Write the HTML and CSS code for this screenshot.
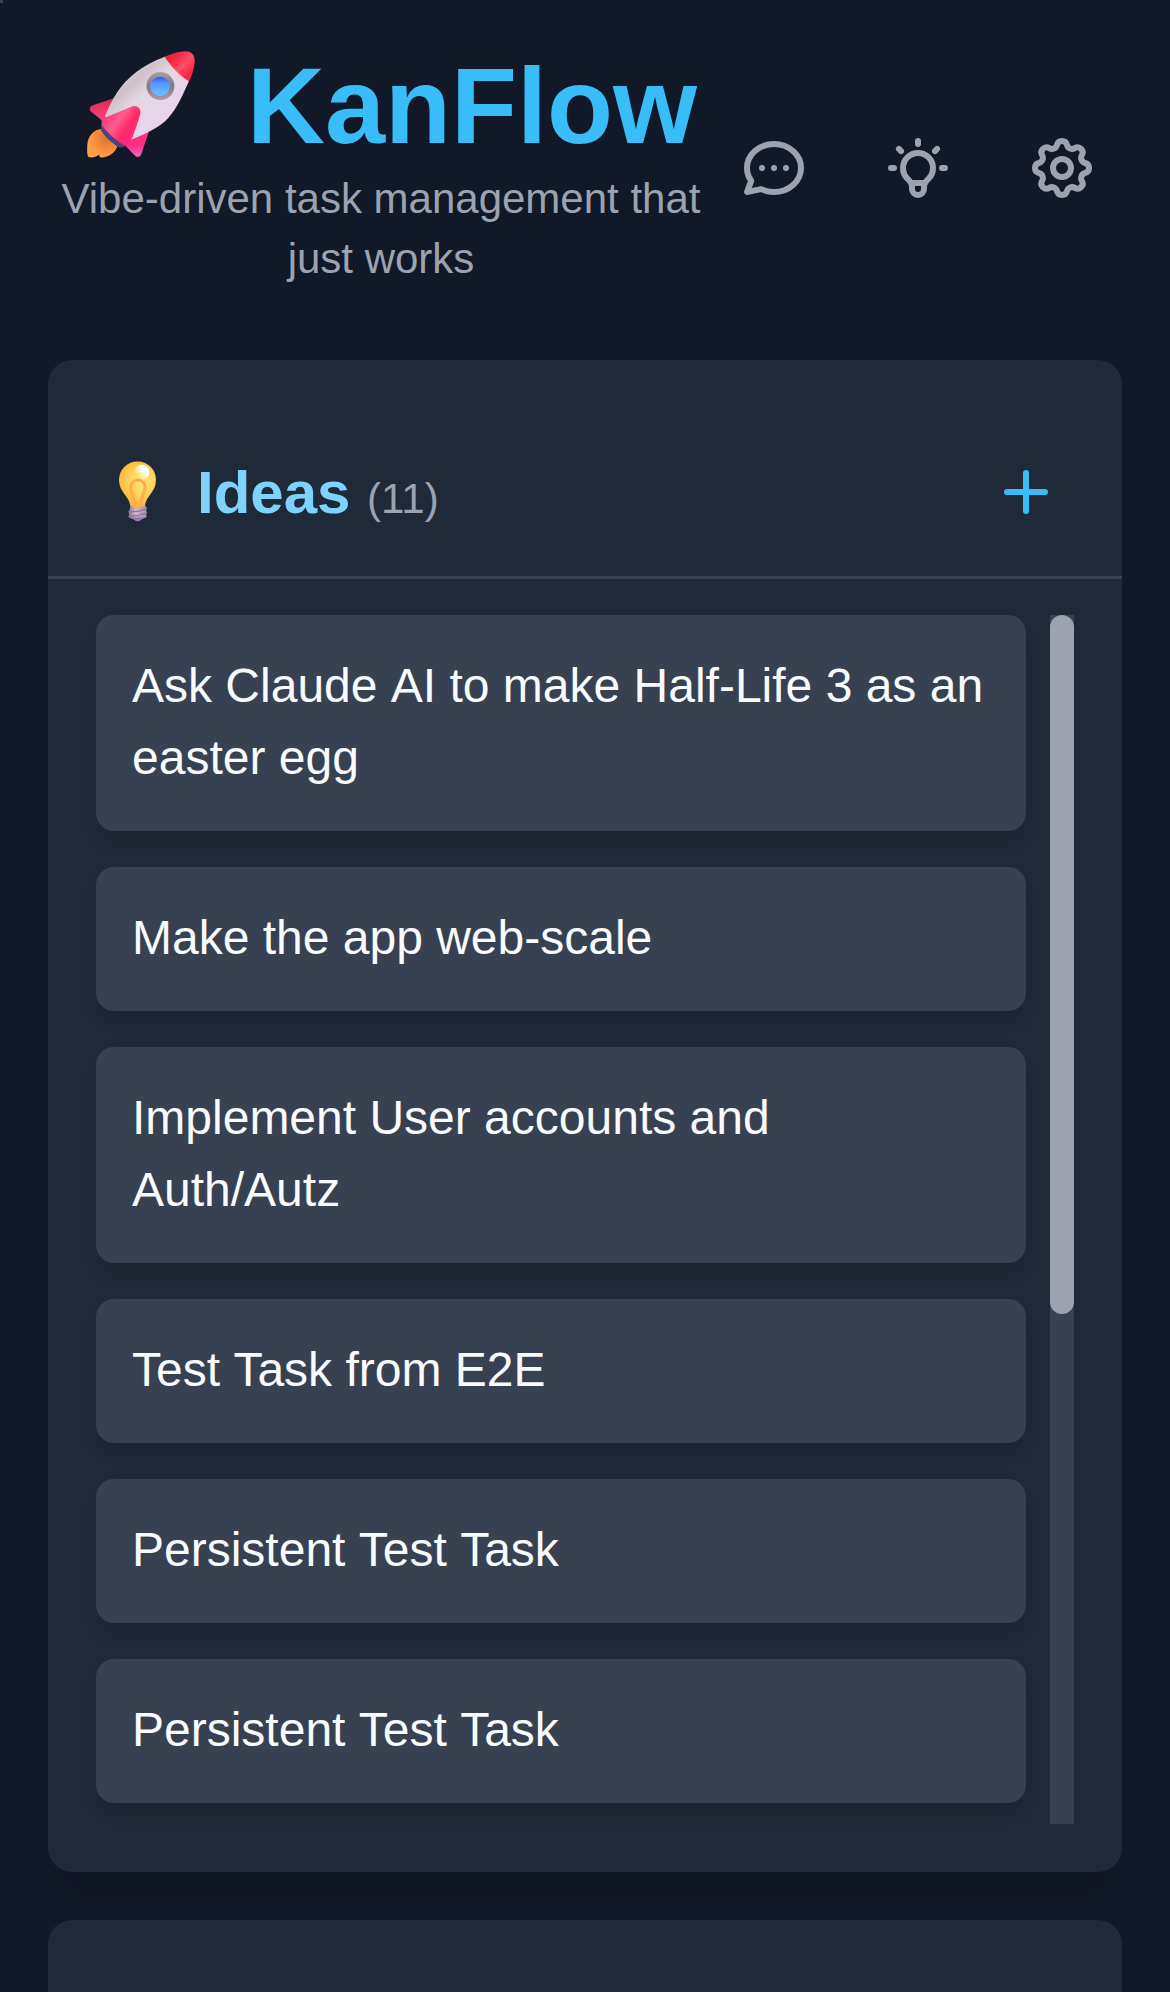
FILE: index.html
```html
<!DOCTYPE html>
<html lang="en">
<head>
<meta charset="utf-8">
<title>KanFlow</title>
<link rel="stylesheet" href="styles.css">
</head>
<body>
<span class="corner-mark"></span>
<header class="app-header">
  <div class="brand">
    <h1 class="brand-title">
      <svg class="rocket" viewBox="141 63 325 321" aria-hidden="true">
        <defs>
          <linearGradient id="hull" x1="240" y1="130" x2="370" y2="270" gradientUnits="userSpaceOnUse">
            <stop offset="0" stop-color="#dcd8dc"/><stop offset=".25" stop-color="#cfc0c9"/><stop offset=".5" stop-color="#e3d8e2"/><stop offset="1" stop-color="#ead2ee"/>
          </linearGradient>
          <linearGradient id="nose" x1="395" y1="75" x2="450" y2="130" gradientUnits="userSpaceOnUse">
            <stop offset="0" stop-color="#e52640"/><stop offset=".25" stop-color="#fb2b48"/><stop offset=".6" stop-color="#ff4f68"/><stop offset="1" stop-color="#f72645"/>
          </linearGradient>
          <linearGradient id="fin" x1="200" y1="255" x2="290" y2="320" gradientUnits="userSpaceOnUse">
            <stop offset="0" stop-color="#f3407c"/><stop offset=".35" stop-color="#ff5c90"/><stop offset=".65" stop-color="#ff2a66"/><stop offset="1" stop-color="#ff2a80"/>
          </linearGradient>
          <linearGradient id="rearFin" x1="0" y1="205" x2="0" y2="380" gradientUnits="userSpaceOnUse">
            <stop offset="0" stop-color="#d62a50"/><stop offset=".3" stop-color="#f63d75"/><stop offset=".8" stop-color="#ff2c82"/><stop offset="1" stop-color="#e76bbd"/>
          </linearGradient>
          <radialGradient id="flame" cx="200" cy="325" r="58" gradientUnits="userSpaceOnUse">
            <stop offset="0" stop-color="#d9742b"/><stop offset=".6" stop-color="#fa8b38"/><stop offset="1" stop-color="#ffa04c"/>
          </radialGradient>
          <linearGradient id="glass" x1="0" y1="140" x2="0" y2="198" gradientUnits="userSpaceOnUse">
            <stop offset="0" stop-color="#3656ee"/><stop offset=".35" stop-color="#559bff"/><stop offset="1" stop-color="#6cc0ff"/>
          </linearGradient>
          <linearGradient id="rim" x1="0" y1="126" x2="0" y2="210" gradientUnits="userSpaceOnUse">
            <stop offset="0" stop-color="#aaa0a6"/><stop offset=".5" stop-color="#82788a"/><stop offset="1" stop-color="#a89bac"/>
          </linearGradient>
        </defs>
        <path fill="url(#flame)" d="M184 297C163 298 144 317 142 343C141 358 141 371 144 380C151 386 165 383 177 375C179 378 178 381 182 383C203 385 227 368 232 350Z"/>
        <path fill="url(#rearFin)" d="M222 205L158 226C150 229 147 237 151 243L190 275L200 255Z"/>
        <path fill="url(#rearFin)" d="M328 303L304 374C301 381 293 383 287 379L255 346L274 325Z"/>
        <path fill="#4a4284" d="M184 282L182 299C192 318 218 343 240 354L257 350Z"/>
        <path fill="url(#hull)" d="M375 80C307 105 262 142 232 187C216 211 204 236 195 260L272 330C310 316 359 293 385 265C414 233 431 190 448 153C440 124 410 88 375 80Z"/>
        <path fill="url(#nose)" d="M375 80C401 68 425 61 446 64C459 68 466 79 465 96C463 119 456 138 448 154C420 137 391 107 375 80Z"/>
        <circle cx="362" cy="168" r="42" fill="url(#rim)"/>
        <circle cx="361" cy="169" r="29" fill="url(#glass)"/>
        <path fill="url(#fin)" d="M185 267L278 229C292 225 303 236 302 249C294 280 283 308 270 342C265 347 255 349 247 343C222 327 198 305 185 284Z"/>
      </svg>
      <span class="brand-name">KanFlow</span>
    </h1>
    <p class="tagline">Vibe-driven task management that just works</p>
  </div>
  <nav class="actions">
    <button class="icon-button" aria-label="Chat">
      <svg class="icon" viewBox="0 0 24 24"><path d="M8 12h.01M12 12h.01M16 12h.01M21 12c0 4.418-4.03 8-9 8a9.863 9.863 0 01-4.255-.949L3 20l1.395-3.72C3.512 15.042 3 13.574 3 12c0-4.418 4.03-8 9-8s9 3.582 9 8z"/></svg>
    </button>
    <button class="icon-button" aria-label="Tips">
      <svg class="icon" viewBox="0 0 24 24"><path d="M9.663 17h4.673M12 3v1m6.364 1.636l-.707.707M21 12h-1M4 12H3m3.343-5.657l-.707-.707m2.828 9.9a5 5 0 117.072 0l-.548.547A3.374 3.374 0 0014 18.469V19a2 2 0 11-4 0v-.531c0-.895-.356-1.754-.988-2.386l-.548-.547z"/></svg>
    </button>
    <button class="icon-button" aria-label="Settings">
      <svg class="icon" viewBox="0 0 24 24"><path d="M10.325 4.317c.426-1.756 2.924-1.756 3.35 0a1.724 1.724 0 002.573 1.066c1.543-.94 3.31.826 2.37 2.37a1.724 1.724 0 001.065 2.572c1.756.426 1.756 2.924 0 3.35a1.724 1.724 0 00-1.066 2.573c.94 1.543-.826 3.31-2.37 2.37a1.724 1.724 0 00-2.572 1.065c-.426 1.756-2.924 1.756-3.35 0a1.724 1.724 0 00-2.573-1.066c-1.543.94-3.31-.826-2.37-2.37a1.724 1.724 0 00-1.065-2.572c-1.756-.426-1.756-2.924 0-3.35a1.724 1.724 0 001.066-2.573c-.94-1.543.826-3.31 2.37-2.37.996.608 2.296.07 2.572-1.065z"/><path d="M15 12a3 3 0 11-6 0 3 3 0 016 0z"/></svg>
    </button>
  </nav>
</header>
<main class="board">
  <section class="column">
    <div class="column-header">
      <svg class="bulb" viewBox="236 332 112 182" aria-hidden="true">
        <defs>
          <radialGradient id="bulbGlass" cx="305" cy="395" r="75" gradientUnits="userSpaceOnUse">
            <stop offset="0" stop-color="#ffe77c"/><stop offset=".5" stop-color="#ffd45a"/><stop offset="1" stop-color="#ffb23c"/>
          </radialGradient>
          <linearGradient id="shine" x1="322" y1="350" x2="292" y2="378" gradientUnits="userSpaceOnUse">
            <stop offset=".35" stop-color="#fff"/><stop offset="1" stop-color="#fff" stop-opacity="0"/>
          </linearGradient>
          <linearGradient id="screw" x1="264" y1="0" x2="321" y2="0" gradientUnits="userSpaceOnUse">
            <stop offset="0" stop-color="#8f7385"/><stop offset=".4" stop-color="#cdb6ca"/><stop offset="1" stop-color="#a58ab8"/>
          </linearGradient>
        </defs>
        <path fill="url(#screw)" d="M270 465H315L321 474L318 480L321 487L318 493L320 500L303 508Q292 518 282 508L264 501L267 491L264 484L269 477Z"/>
        <path fill="#9c70bb" d="M269 502L316 501L303 508Q292 518 282 508Z"/>
        <path stroke="#866b90" stroke-width="3" fill="none" d="M268 485Q295 486 320 475M267 498Q295 499 319 488"/>
        <path fill="url(#bulbGlass)" d="M292 332A56 56 0 0 1 348 388C348 425 316 438 315 466Q293 475 270 466C268 438 236 425 236 388A56 56 0 0 1 292 332Z"/>
        <path fill="none" stroke="#ffab50" stroke-width="9" d="M284 468C284 435 271 429 271 410A22 22 0 0 1 315 410C315 429 301 435 301 468"/>
        <ellipse cx="305" cy="364" rx="23" ry="22" fill="url(#shine)"/>
      </svg>
      <h2 class="column-title">Ideas <span class="count">(11)</span></h2>
      <button class="add-button" aria-label="Add idea">
        <svg class="plus" viewBox="0 0 44 44"><path d="M22 3v38M3 22h38"/></svg>
      </button>
    </div>
    <div class="column-body">
      <ul class="tasks">
        <li class="task">Ask Claude <span class="word">AI</span> to make Half-Life 3 as an easter egg</li>
        <li class="task">Make the app web-scale</li>
        <li class="task">Implement User accounts and Auth/Autz</li>
        <li class="task">Test <span class="word">Task</span> from E2E</li>
        <li class="task">Persistent <span class="word">Test</span> <span class="word">Task</span></li>
        <li class="task">Persistent <span class="word">Test</span> <span class="word">Task</span></li>
      </ul>
      <div class="scroll-track"><div class="scroll-thumb"></div></div>
    </div>
  </section>
  <section class="column column-next"></section>
</main>
</body>
</html>
```

FILE: styles.css
```css
* {
  box-sizing: border-box;
  margin: 0;
  padding: 0;
}

body {
  display: flex;
  flex-direction: column;
  height: 1992px;
  background: #111827;
  color: #f9fafb;
  font-family: "Liberation Sans", Arial, sans-serif;
}

button {
  border: 0;
  background: none;
}

.corner-mark {
  position: absolute;
  top: 0;
  left: 0;
  width: 3px;
  height: 3px;
  background: #374151;
}

.app-header {
  display: flex;
  flex: none;
  align-items: center;
  height: 288px;
  margin-bottom: 72px;
  padding: 48px 48px 0;
}

.brand {
  flex: 1;
  text-align: center;
}

.brand-title {
  display: flex;
  justify-content: center;
  gap: 52px;
  height: 121px;
  padding-left: 22px;
  color: #38bdf8;
  font-size: 108px;
  line-height: 120px;
}

.brand-name {
  margin-top: -2px;
}

.rocket {
  width: 108px;
  height: 107px;
  margin-top: 3px;
}

.tagline {
  height: 119px;
  color: #9ca3af;
  font-size: 42px;
  line-height: 60px;
}

.actions {
  display: flex;
  gap: 24px;
}

.icon-button {
  display: flex;
  align-items: center;
  justify-content: center;
  width: 120px;
  height: 120px;
}

.icon {
  width: 72px;
  height: 72px;
  fill: none;
  stroke: #9ca3af;
  stroke-width: 2;
  stroke-linecap: round;
  stroke-linejoin: round;
}

.board {
  display: flex;
  flex: 1;
  flex-direction: column;
  gap: 48px;
  padding: 0 48px;
}

.column {
  flex: none;
  height: 1512px;
  border-radius: 24px;
  background: #1f2937;
  box-shadow: 0 30px 45px -9px rgba(0, 0, 0, .1);
}

.column-next {
  height: 72px;
  border-radius: 24px 24px 0 0;
}

.column-header {
  display: flex;
  align-items: center;
  height: 219px;
  padding: 84px 48px 36px 71px;
  border-bottom: 3px solid #374151;
}

.bulb {
  width: 37px;
  height: 61px;
  margin-bottom: 2px;
}

.column-title {
  flex: 1;
  margin-left: 41px;
  padding-top: 2px;
  color: #7dd3fc;
  font-size: 60px;
  line-height: 84px;
}

.count {
  color: #9ca3af;
  font-size: 42px;
  font-weight: 400;
  line-height: 1;
}

.add-button {
  display: flex;
  align-items: center;
  justify-content: center;
  width: 96px;
  height: 96px;
}

.plus {
  width: 44px;
  height: 44px;
  fill: none;
  stroke: #38bdf8;
  stroke-width: 6;
  stroke-linecap: round;
}

.column-body {
  display: flex;
  gap: 24px;
  padding: 36px 48px 48px;
}

.tasks {
  display: flex;
  flex: 1;
  flex-direction: column;
  gap: 36px;
  list-style: none;
}

.task {
  padding: 35px 42px 37px 36px;
  border-radius: 18px;
  background: #374151;
  box-shadow: 0 12px 18px -3px rgba(0, 0, 0, .1);
  font-size: 48px;
  line-height: 72px;
}

.word {
  display: inline-block;
}

.scroll-track {
  width: 24px;
  height: 1209px;
  background: #374151;
}

.scroll-thumb {
  height: 699px;
  border-radius: 12px;
  background: #9ca3af;
}
```
